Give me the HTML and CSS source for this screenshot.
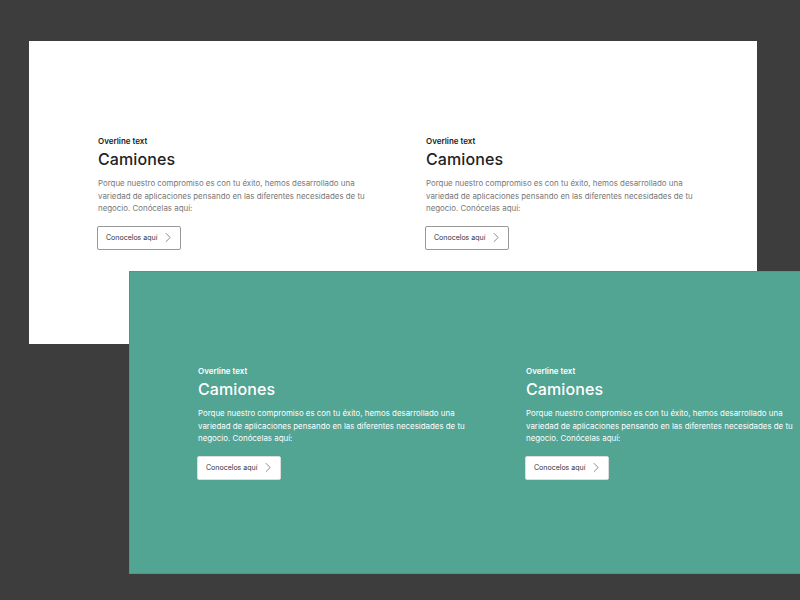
FILE: index.html
```html
<!DOCTYPE html>
<html lang="es">
<head>
<meta charset="utf-8">
<title>Camiones</title>
<link rel="stylesheet" href="styles.css">
</head>
<body>
<div class="stage">
  <section class="card card-light">
    <div class="col">
      <p class="overline">Overline text</p>
      <h2 class="title">Camiones</h2>
      <p class="body">Porque nuestro compromiso es con tu éxito, hemos desarrollado una variedad de aplicaciones pensando en las diferentes necesidades de tu negocio. Conócelas aquí:</p>
      <a class="btn" href="#">Conocelos aquí <svg class="chev" width="7" height="12" viewBox="0 0 7 12"><path d="M1 1l5 5-5 5" fill="none" stroke="#555" stroke-width="0.8"/></svg></a>
    </div>
    <div class="col">
      <p class="overline">Overline text</p>
      <h2 class="title">Camiones</h2>
      <p class="body">Porque nuestro compromiso es con tu éxito, hemos desarrollado una variedad de aplicaciones pensando en las diferentes necesidades de tu negocio. Conócelas aquí:</p>
      <a class="btn" href="#">Conocelos aquí <svg class="chev" width="7" height="12" viewBox="0 0 7 12"><path d="M1 1l5 5-5 5" fill="none" stroke="#555" stroke-width="0.8"/></svg></a>
    </div>
  </section>
  <section class="card card-teal">
    <div class="col">
      <p class="overline">Overline text</p>
      <h2 class="title">Camiones</h2>
      <p class="body">Porque nuestro compromiso es con tu éxito, hemos desarrollado una variedad de aplicaciones pensando en las diferentes necesidades de tu negocio. Conócelas aquí:</p>
      <a class="btn" href="#">Conocelos aquí <svg class="chev" width="7" height="12" viewBox="0 0 7 12"><path d="M1 1l5 5-5 5" fill="none" stroke="#555" stroke-width="0.8"/></svg></a>
    </div>
    <div class="col">
      <p class="overline">Overline text</p>
      <h2 class="title">Camiones</h2>
      <p class="body">Porque nuestro compromiso es con tu éxito, hemos desarrollado una variedad de aplicaciones pensando en las diferentes necesidades de tu negocio. Conócelas aquí:</p>
      <a class="btn" href="#">Conocelos aquí <svg class="chev" width="7" height="12" viewBox="0 0 7 12"><path d="M1 1l5 5-5 5" fill="none" stroke="#555" stroke-width="0.8"/></svg></a>
    </div>
  </section>
</div>
</body>
</html>
```
FILE: styles.css
```css
html, body {
  margin: 0;
  padding: 0;
  width: 800px;
  height: 600px;
  overflow: hidden;
  background: #3d3d3d;
  font-family: Inter, "Noto Sans", sans-serif;
}
.stage {
  display: grid;
  padding: 41px 0 0 29px;
}
.card {
  grid-area: 1 / 1;
  width: 728px;
  height: 303px;
  box-sizing: border-box;
  padding: 95px 0 0 69px;
  display: flex;
  gap: 58px;
}
.card-light {
  background: #ffffff;
}
.card-teal {
  width: 671px;
  margin: 230px 0 0 100px;
  background: #52a493;
  border: 1px solid #4a9a8a;
  border-right: 0;
  padding: 94px 0 0 68px;
}
.col {
  width: 270px;
  flex: none;
  display: flex;
  flex-direction: column;
  align-items: flex-start;
}
.overline {
  margin: 0;
  font-size: 8px;
  line-height: 10px;
  font-weight: 600;
  color: #222;
}
.title {
  margin: 3px 0 0;
  font-size: 16px;
  line-height: 20px;
  font-weight: 500;
  color: #222;
  letter-spacing: 0.1px;
}
.body {
  margin: 8px 0 0;
  font-size: 7.9px;
  line-height: 12.5px;
  color: #777;
}
.btn {
  margin: 11px 0 0 -1px;
  display: flex;
  align-items: center;
  gap: 8px;
  width: 84px;
  height: 24px;
  box-sizing: border-box;
  padding-left: 8px;
  border: 1px solid #999;
  border-radius: 2px;
  background: #fff;
  font-size: 7px;
  color: #333;
  text-decoration: none;
}
.chev {
  width: 6px;
  height: 11px;
}
.card-teal .overline,
.card-teal .title,
.card-teal .body {
  color: #ffffff;
}
.card-teal .btn {
  border-color: #ddd;
}
```
